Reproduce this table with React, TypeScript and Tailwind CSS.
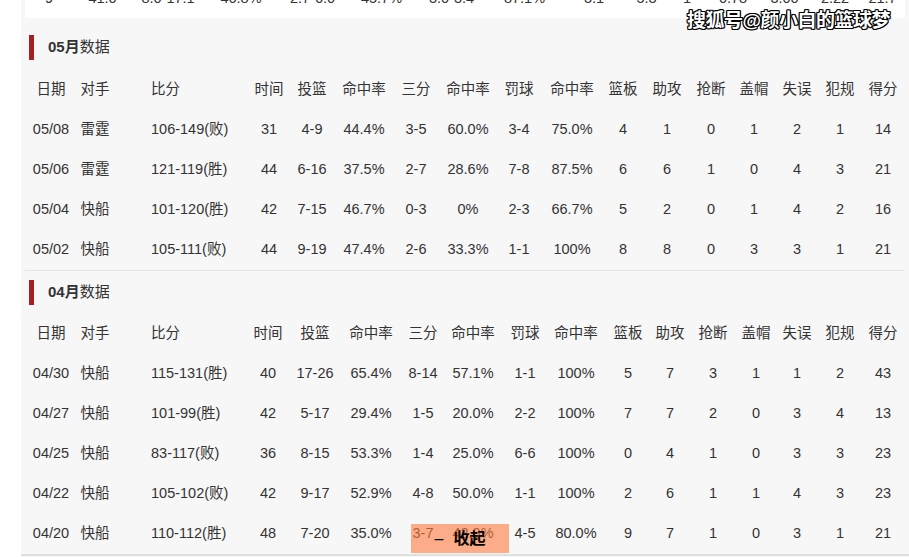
import React from "react"

const font = "font-['Liberation_Sans','Noto_Sans_CJK_SC',sans-serif]"

const headers = ["日期", "对手", "比分", "时间", "投篮", "命中率", "三分", "命中率", "罚球", "命中率", "篮板", "助攻", "抢断", "盖帽", "失误", "犯规", "得分"]

const mayRows = [
    ["05/08", "雷霆", "106-149(败)", "31", "4-9", "44.4%", "3-5", "60.0%", "3-4", "75.0%", "4", "1", "0", "1", "2", "1", "14"],
    ["05/06", "雷霆", "121-119(胜)", "44", "6-16", "37.5%", "2-7", "28.6%", "7-8", "87.5%", "6", "6", "1", "0", "4", "3", "21"],
    ["05/04", "快船", "101-120(胜)", "42", "7-15", "46.7%", "0-3", "0%", "2-3", "66.7%", "5", "2", "0", "1", "4", "2", "16"],
    ["05/02", "快船", "105-111(败)", "44", "9-19", "47.4%", "2-6", "33.3%", "1-1", "100%", "8", "8", "0", "3", "3", "1", "21"],
]

const aprRows = [
    ["04/30", "快船", "115-131(胜)", "40", "17-26", "65.4%", "8-14", "57.1%", "1-1", "100%", "5", "7", "3", "1", "1", "2", "43"],
    ["04/27", "快船", "101-99(胜)", "42", "5-17", "29.4%", "1-5", "20.0%", "2-2", "100%", "7", "7", "2", "0", "3", "4", "13"],
    ["04/25", "快船", "83-117(败)", "36", "8-15", "53.3%", "1-4", "25.0%", "6-6", "100%", "0", "4", "1", "0", "3", "3", "23"],
    ["04/22", "快船", "105-102(败)", "42", "9-17", "52.9%", "4-8", "50.0%", "1-1", "100%", "2", "6", "1", "1", "4", "3", "23"],
    ["04/20", "快船", "110-112(胜)", "48", "7-20", "35.0%", "3-7", "42.9%", "4-5", "80.0%", "9", "7", "1", "0", "3", "1", "21"],
]

const averages = ["9", "41.0", "8.0-17.1", "46.8%", "2.7-6.0", "45.7%", "3.0-3.4", "87.1%", "3.1", "5.3", "1", "0.78", "3.00", "2.22", "21.7"]

function Row({ cells, cols }: { cells: string[]; cols: string }) {
    return (
        <div className={`grid h-10 items-center ${cols}`}>
            {cells.map((c, i) => (
                <div key={i} className={i === 2 ? "pl-[34px] text-left whitespace-nowrap" : "text-center whitespace-nowrap"}>
                    {c}
                </div>
            ))}
        </div>
    )
}

function Section({ month, rows, cols, top, gap }: { month: string; rows: string[][]; cols: string; top: string; gap: string }) {
    return (
        <section className={top}>
            <div className="flex h-[25px] items-center pl-1">
                <div className="h-full w-[5px] bg-[#a61f24]" />
                <h3 className="ml-[14px] text-[15px] text-[#333]">
                    <b>{month}</b>数据
                </h3>
            </div>
            <div className={`${gap} pl-1`}>
                <Row cells={headers} cols={cols} />
                {rows.map((r) => (
                    <Row key={r[0]} cells={r} cols={cols} />
                ))}
            </div>
        </section>
    )
}

export default function App() {
    return (
        <div className={`relative flex min-h-[557px] bg-white text-[14.5px] text-[#333] ${font}`}>
            <div className="w-[21px] shrink-0" />
            <div className="flex-1 bg-[#f7f7f7] px-1">
                <div className="h-[18px] overflow-hidden bg-white">
                    <div className="-mt-[21px] grid h-10 grid-cols-[48px_59px_72px_74px_69px_69px_71px_75px_64px_41px_40px_52px_51px_50px_45px] items-center">
                        {averages.map((a, i) => (
                            <div key={i} className="text-center">{a}</div>
                        ))}
                    </div>
                </div>

                <Section
                    month="05月"
                    rows={mayRows}
                    top="pt-[17px]"
                    gap="mt-[10px]"
                    cols="grid-cols-[44px_44px_130px_44px_42px_62px_42px_62px_40px_66px_36px_52px_36px_50px_36px_50px_36px]"
                />
                <div className="h-px bg-[#e4e4e4]" />
                <Section
                    month="04月"
                    rows={aprRows}
                    top="pt-[9px]"
                    gap="mt-[9px]"
                    cols="grid-cols-[44px_44px_128px_46px_48px_64px_40px_60px_44px_58px_46px_38px_48px_38px_44px_42px_44px]"
                />
                <div className="-mx-1 h-[2px] bg-[#e0e0e0]" />
            </div>

            <div className="pointer-events-none absolute left-[687px] top-[7px] text-[19px] font-bold tracking-[-0.5px] text-white [text-shadow:1px_1px_0_#000,-1px_-1px_0_#000,1px_-1px_0_#000,-1px_1px_0_#000,0_1px_0_#000,0_-1px_0_#000,1px_0_0_#000,-1px_0_0_#000]">
                搜狐号@颜小白的篮球梦
            </div>

            <button className="absolute left-[411px] top-[524px] flex h-[29px] w-[98px] items-center justify-center gap-[10px] bg-[#ff7a3d]/60 text-[16px] font-bold text-black">
                <span className="font-normal">–</span>
                <span>收起</span>
            </button>
        </div>
    )
}
